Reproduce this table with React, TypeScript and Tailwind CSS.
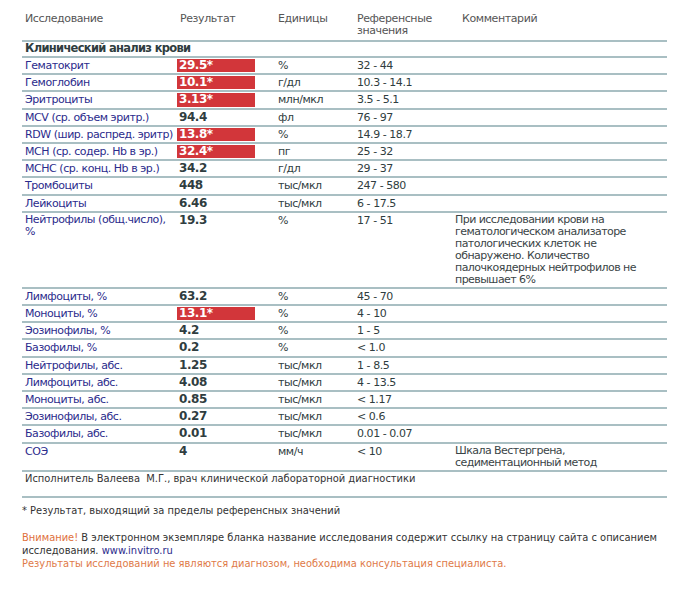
import React from "react";

type Row = {
  name: string;
  value: string;
  high?: boolean;
  unit: string;
  ref: string;
  comment?: string[];
  nameLines?: string[];
};

const rows: Row[] = [
  { name: "Гематокрит", value: "29.5*", high: true, unit: "%", ref: "32 - 44" },
  { name: "Гемоглобин", value: "10.1*", high: true, unit: "г/дл", ref: "10.3 - 14.1" },
  { name: "Эритроциты", value: "3.13*", high: true, unit: "млн/мкл", ref: "3.5 - 5.1" },
  { name: "MCV (ср. объем эритр.)", value: "94.4", unit: "фл", ref: "76 - 97" },
  { name: "RDW (шир. распред. эритр)", value: "13.8*", high: true, unit: "%", ref: "14.9 - 18.7" },
  { name: "MCH (ср. содер. Hb в эр.)", value: "32.4*", high: true, unit: "пг", ref: "25 - 32" },
  { name: "MCHC (ср. конц. Hb в эр.)", value: "34.2", unit: "г/дл", ref: "29 - 37" },
  { name: "Тромбоциты", value: "448", unit: "тыс/мкл", ref: "247 - 580" },
  { name: "Лейкоциты", value: "6.46", unit: "тыс/мкл", ref: "6 - 17.5" },
  {
    name: "Нейтрофилы (общ.число), %",
    nameLines: ["Нейтрофилы (общ.число),", "%"],
    value: "19.3",
    unit: "%",
    ref: "17 - 51",
    comment: [
      "При исследовании крови на",
      "гематологическом анализаторе",
      "патологических клеток не",
      "обнаружено. Количество",
      "палочкоядерных нейтрофилов не",
      "превышает 6%",
    ],
  },
  { name: "Лимфоциты, %", value: "63.2", unit: "%", ref: "45 - 70" },
  { name: "Моноциты, %", value: "13.1*", high: true, unit: "%", ref: "4 - 10" },
  { name: "Эозинофилы, %", value: "4.2", unit: "%", ref: "1 - 5" },
  { name: "Базофилы, %", value: "0.2", unit: "%", ref: "< 1.0" },
  { name: "Нейтрофилы, абс.", value: "1.25", unit: "тыс/мкл", ref: "1 - 8.5" },
  { name: "Лимфоциты, абс.", value: "4.08", unit: "тыс/мкл", ref: "4 - 13.5" },
  { name: "Моноциты, абс.", value: "0.85", unit: "тыс/мкл", ref: "< 1.17" },
  { name: "Эозинофилы, абс.", value: "0.27", unit: "тыс/мкл", ref: "< 0.6" },
  { name: "Базофилы, абс.", value: "0.01", unit: "тыс/мкл", ref: "0.01 - 0.07" },
  {
    name: "СОЭ",
    value: "4",
    unit: "мм/ч",
    ref: "< 10",
    comment: ["Шкала Вестергрена,", "седиментационный метод"],
  },
];

const grid = "grid grid-cols-[155px_101px_79px_98px_1fr]";
const narrow = "font-['DejaVu_Sans_Condensed','Liberation_Sans_Narrow',sans-serif]";

const App = () => {
  return (
    <div className="w-[689px] h-[600px] bg-white overflow-hidden font-['DejaVu_Sans',sans-serif] text-[11px]">
      <div className="ml-[22px] w-[645px] pt-[13px]">
        {/* header */}
        <div className={`${grid} border-b-2 border-[#a9bfc3] pb-[3px] leading-[12px] tracking-[-0.4px] text-[#555]`}>
          <div className="pl-[3px]">Исследование</div>
          <div className="pl-[3px]">Результат</div>
          <div>Единицы</div>
          <div>
            Референсные
            <br />
            значения
          </div>
          <div className="pl-[7px]">Комментарий</div>
        </div>

        <div className="border-b-2 border-[#a9bfc3] pl-[3px] pb-[1px] leading-[13px] font-bold text-[11.5px] tracking-[-0.7px] text-[#2f3d40]">
          Клинический анализ крови
        </div>

        {rows.map((r) => (
          <div
            key={r.name}
            className={`${grid} border-b-2 border-[#a9bfc3] py-[1px] leading-[13.2px] tracking-[-0.45px]`}
          >
            <div className="pl-[3px] text-[#2b2b8c] whitespace-nowrap">
              {r.nameLines
                ? r.nameLines.map((l) => <div key={l} className="leading-[12.5px]">{l}</div>)
                : r.name}
            </div>
            <div>
              {r.high ? (
                <div className="w-[78px] bg-[#d2363a] text-white font-bold pl-[2px] text-[12px] leading-[13.2px]">
                  {r.value}
                </div>
              ) : (
                <div className="pl-[2px] font-bold text-[12px] text-[#2f3d40]">{r.value}</div>
              )}
            </div>
            <div className="text-[#2f3d40]">{r.unit}</div>
            <div className="text-[#2f3d40]">{r.ref}</div>
            <div className="text-[#3a4446] leading-[12px] tracking-[-0.55px]">
              {r.comment?.map((c) => (
                <div key={c}>{c}</div>
              ))}
            </div>
          </div>
        ))}

        <div className={`border-b-2 border-[#a9bfc3] pl-[3px] pb-[10px] ${narrow} text-[11px] leading-[14px] text-[#333]`}>
          Исполнитель Валеева&nbsp; М.Г., врач клинической лабораторной диагностики
        </div>

        <div className={`pt-[6px] ${narrow} text-[11px] leading-[13px] text-[#333]`}>
          <div>* Результат, выходящий за пределы референсных значений</div>
          <div className="mt-[14px]">
            <span className="text-[#e0703c]">Внимание!</span> В электронном экземпляре бланка название
            исследования содержит ссылку на страницу сайта с описанием исследования.{" "}
            <span className="text-[#2b2b8c]">www.invitro.ru</span>
          </div>
          <div className="text-[#e07a48]">
            Результаты исследований не являются диагнозом, необходима консультация специалиста.
          </div>
        </div>
      </div>
    </div>
  );
};

export default App;
